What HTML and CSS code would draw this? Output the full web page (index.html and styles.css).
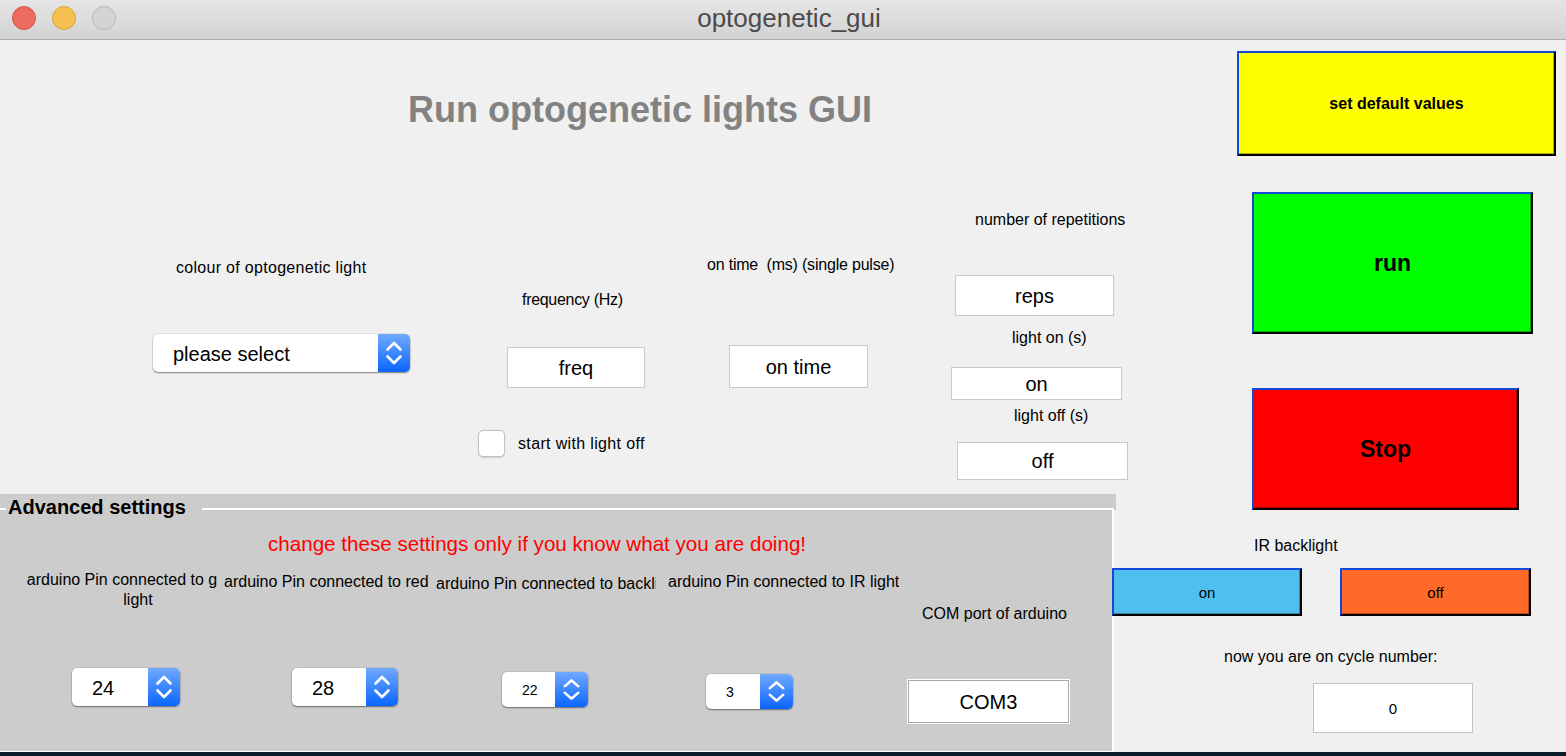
FILE: index.html
```html
<!DOCTYPE html>
<html>
<head>
<meta charset="utf-8">
<title>optogenetic_gui</title>
<link rel="stylesheet" href="styles.css">
</head>
<body>
<div class="window">
  <header class="titlebar">
    <div class="lights">
      <span class="light red"></span>
      <span class="light yellow"></span>
      <span class="light gray"></span>
    </div>
    <div class="wtitle">optogenetic_gui</div>
    <div></div>
  </header>

  <div class="main">
    <div class="left">
      <section class="top">
        <h1 class="app-title">Run optogenetic lights GUI</h1>
        <div class="controls">
          <div class="col col1">
            <div class="lbl">colour of optogenetic light</div>
            <div class="popup big">
              <div class="popup-val">please select</div>
              <div class="popup-btn"><svg viewBox="0 0 32 38" preserveAspectRatio="none"><path d="M9.5 15.5 L16 9 L22.5 15.5 M9.5 22.5 L16 29 L22.5 22.5" fill="none" stroke="#fff" stroke-width="2.6" stroke-linecap="round" stroke-linejoin="round"/></svg></div>
            </div>
          </div>
          <div class="col col2">
            <div class="lbl">frequency (Hz)</div>
            <div class="edit e-freq">freq</div>
            <div class="check-row">
              <span class="checkbox"></span>
              <span class="lbl">start with light off</span>
            </div>
          </div>
          <div class="col col3">
            <div class="lbl">on time&nbsp; (ms) (single pulse)</div>
            <div class="edit e-ontime">on time</div>
          </div>
          <div class="col col4">
            <div class="lbl l-reps">number of repetitions</div>
            <div class="edit e-reps">reps</div>
            <div class="lbl l-on">light on (s)</div>
            <div class="edit e-on">on</div>
            <div class="lbl l-off">light off (s)</div>
            <div class="edit e-off">off</div>
          </div>
        </div>
      </section>

      <section class="panel">
        <div class="panel-head">
          <span class="ph-left"></span>
          <span class="legend">Advanced settings</span>
          <span class="ph-rule"></span>
        </div>
        <div class="frame">
          <div class="warn">change these settings only if you know what you are doing!</div>
          <div class="pins">
            <div class="pcol pcol1">
              <div class="plbl"><div class="plbl-inner">arduino Pin connected to green<br>light</div></div>
              <div class="popup big">
                <div class="popup-val">24</div>
                <div class="popup-btn"><svg viewBox="0 0 32 38" preserveAspectRatio="none"><path d="M9.5 15.5 L16 9 L22.5 15.5 M9.5 22.5 L16 29 L22.5 22.5" fill="none" stroke="#fff" stroke-width="2.6" stroke-linecap="round" stroke-linejoin="round"/></svg></div>
              </div>
            </div>
            <div class="pcol pcol2">
              <div class="plbl">arduino Pin connected to red</div>
              <div class="popup big">
                <div class="popup-val">28</div>
                <div class="popup-btn"><svg viewBox="0 0 32 38" preserveAspectRatio="none"><path d="M9.5 15.5 L16 9 L22.5 15.5 M9.5 22.5 L16 29 L22.5 22.5" fill="none" stroke="#fff" stroke-width="2.6" stroke-linecap="round" stroke-linejoin="round"/></svg></div>
              </div>
            </div>
            <div class="pcol pcol3">
              <div class="plbl">arduino Pin connected to backlight</div>
              <div class="popup small">
                <div class="popup-val">22</div>
                <div class="popup-btn"><svg viewBox="0 0 32 38" preserveAspectRatio="none"><path d="M9.5 15.5 L16 9 L22.5 15.5 M9.5 22.5 L16 29 L22.5 22.5" fill="none" stroke="#fff" stroke-width="2.6" stroke-linecap="round" stroke-linejoin="round"/></svg></div>
              </div>
            </div>
            <div class="pcol pcol4">
              <div class="plbl">arduino Pin connected to IR light</div>
              <div class="popup small">
                <div class="popup-val">3</div>
                <div class="popup-btn"><svg viewBox="0 0 32 38" preserveAspectRatio="none"><path d="M9.5 15.5 L16 9 L22.5 15.5 M9.5 22.5 L16 29 L22.5 22.5" fill="none" stroke="#fff" stroke-width="2.6" stroke-linecap="round" stroke-linejoin="round"/></svg></div>
              </div>
            </div>
            <div class="pcol pcol5">
              <div class="plbl">COM port of arduino</div>
              <div class="edit e-com">COM3</div>
            </div>
          </div>
        </div>
      </section>
    </div>

    <aside class="right">
      <div class="btn btn-default">set default values</div>
      <div class="btn btn-run">run</div>
      <div class="btn btn-stop">Stop</div>
      <div class="lbl ir-label">IR backlight</div>
      <div class="ir-row">
        <div class="btn btn-on">on</div>
        <div class="btn btn-off">off</div>
      </div>
      <div class="lbl cycle-label">now you are on cycle number:</div>
      <div class="edit e-cycle">0</div>
    </aside>
  </div>
  <div class="desk"></div>
</div>
</body>
</html>
```

FILE: styles.css
```css
html, body {
  margin: 0;
  padding: 0;
}
body {
  width: 1566px;
  height: 756px;
  overflow: hidden;
  background: #f0f0f0;
  font-family: "Liberation Sans", Arial, sans-serif;
  color: #000;
}
.window {
  display: flex;
  flex-direction: column;
  height: 756px;
}

/* title bar */
.titlebar {
  height: 39px;
  border-bottom: 1px solid #acacac;
  background: linear-gradient(#e6e6e6, #d2d2d2);
  display: grid;
  grid-template-columns: 1fr auto 1fr;
  align-items: center;
  flex: none;
}
.lights {
  display: flex;
  gap: 16px;
  padding-left: 12px;
  margin-top: -3px;
}
.light {
  width: 22px;
  height: 22px;
  border-radius: 50%;
  border: 1px solid;
}
.light.red { background: #ed6a5e; border-color: #d5534a; }
.light.yellow { background: #f6c050; border-color: #d9a23b; }
.light.gray { background: #d4d4d4; border-color: #b8b8b8; }
.wtitle {
  font-size: 26px;
  color: #4b4b4b;
  padding-left: 12px;
  margin-top: -2px;
}

.main {
  display: flex;
  height: 712px;
  flex: none;
}
.left {
  width: 1115px;
  flex: none;
  display: flex;
  flex-direction: column;
}
.top {
  height: 454px;
  flex: none;
}
.app-title {
  margin: 0;
  padding: 50px 0 0 408px;
  height: 90px;
  font-size: 36px;
  line-height: 40px;
  font-weight: bold;
  color: #828282;
}
.controls {
  display: flex;
  align-items: flex-start;
}
.col {
  flex: none;
  display: flex;
  flex-direction: column;
  align-items: flex-start;
}
.lbl {
  font-size: 16px;
  line-height: 20px;
  white-space: nowrap;
}

/* edit boxes */
.edit {
  box-sizing: border-box;
  background: #fff;
  border: 1px solid #c9c9c9;
  display: flex;
  align-items: center;
  justify-content: center;
  font-size: 20px;
  flex: none;
  padding-top: 1px;
}

/* popup menus */
.popup {
  display: flex;
  background: #fff;
  border-radius: 5px;
  box-shadow: 0 1px 1.5px rgba(0,0,0,0.45), 0 0 0 0.5px rgba(0,0,0,0.12);
  flex: none;
}
.popup-val {
  flex: 1;
  padding: 3px 0 0 20px;
  display: flex;
  align-items: center;
  font-size: 20px;
}
.popup.small .popup-val {
  font-size: 14px;
  padding-top: 1px;
}
.popup-btn {
  width: 32px;
  flex: none;
  background: linear-gradient(#70a9ff, #0a66ff);
  border-radius: 0 5px 5px 0;
  display: flex;
}
.popup.small .popup-btn {
  width: 33px;
}
.popup-btn svg {
  width: 100%;
  height: 100%;
  display: block;
}

/* column 1 */
.col1 { margin-left: 153px; width: 257px; }
.col1 .lbl { margin-top: 78px; padding-left: 23px; letter-spacing: 0.3px; }
.col1 .popup { margin-top: 56px; width: 257px; height: 38px; }

/* column 2 */
.col2 { margin-left: 68px; width: 167px; }
.col2 > .lbl { margin-top: 110px; padding-left: 44px; letter-spacing: -0.3px; }
.e-freq { margin: 37px 0 0 29px; width: 138px; height: 41px; }
.check-row {
  margin-top: 42px;
  display: flex;
  align-items: center;
  gap: 13px;
}
.check-row .lbl { letter-spacing: 0.35px; }
.checkbox {
  box-sizing: border-box;
  width: 27px;
  height: 27px;
  background: #fff;
  border: 1px solid #c2c2c2;
  border-radius: 5px;
  box-shadow: 0 0.5px 1px rgba(0,0,0,0.15);
}

/* column 3 */
.col3 { margin-left: 62px; width: 187px; }
.col3 .lbl { margin-top: 75px; letter-spacing: -0.2px; }
.e-ontime { margin: 70px 0 0 22px; width: 139px; height: 43px; }

/* column 4 */
.col4 { margin-left: 57px; width: 177px; }
.l-reps { margin-top: 30px; padding-left: 24px; }
.e-reps { margin: 45px 0 0 4px; width: 159px; height: 41px; }
.l-on { margin-top: 12px; padding-left: 61px; }
.e-on { margin-top: 19px; width: 171px; height: 33px; }
.l-off { margin-top: 6px; padding-left: 63px; }
.e-off { margin: 16px 0 0 6px; width: 171px; height: 38px; }

/* advanced panel */
.panel {
  height: 258px;
  flex: none;
}
.panel-head {
  height: 16px;
  width: 1116px;
  background: #cccccc;
  display: flex;
  align-items: flex-end;
}
.ph-left {
  width: 6px;
  border-bottom: 2px solid #fff;
}
.legend {
  position: relative;
  z-index: 1;
  align-self: flex-start;
  width: 194px;
  height: 16px;
  margin-top: 1px;
  padding-left: 2px;
  font-size: 20px;
  line-height: 24px;
  font-weight: bold;
  white-space: nowrap;
}
.ph-rule {
  flex: 1;
  margin-right: 2px;
  border-bottom: 2px solid #fff;
}
.frame {
  box-sizing: border-box;
  height: 242px;
  width: 1114px;
  background: #cccccc;
  border-right: 2px solid #fff;
  border-bottom: 1px solid #fff;
}
.warn {
  padding: 22px 0 0 268px;
  font-size: 20.6px;
  line-height: 24px;
  color: #ff0000;
}
.pins {
  display: flex;
  align-items: flex-start;
}
.pcol {
  flex: none;
  display: flex;
  flex-direction: column;
  align-items: flex-start;
}
.plbl {
  font-size: 16px;
  line-height: 20px;
  white-space: nowrap;
  overflow: hidden;
}
.pcol1 { margin-left: 24px; width: 194px; }
.pcol1 .plbl { margin-top: 14px; width: 194px; }
.plbl-inner { width: 228px; text-align: center; }
.pcol1 .popup { margin: 58px 0 0 48px; width: 108px; height: 38px; }

.pcol2 { margin-left: 6px; width: 205px; }
.pcol2 .plbl { margin-top: 16px; }
.pcol2 .popup { margin: 76px 0 0 68px; width: 106px; height: 38px; }

.pcol3 { margin-left: 7px; width: 220px; }
.pcol3 .plbl { margin-top: 18px; width: 220px; }
.pcol3 .popup { margin: 78px 0 0 66px; width: 86px; height: 35px; }

.pcol4 { margin-left: 12px; width: 231px; }
.pcol4 .plbl { margin-top: 16px; }
.pcol4 .popup { margin: 82px 0 0 38px; width: 87px; height: 35px; }

.pcol5 { margin-left: 9px; width: 163px; }
.pcol5 .plbl { margin-top: 48px; padding-left: 14px; }
.e-com {
  margin-top: 56px;
  width: 161px;
  height: 43px;
  border: 1px solid #a9a9a9;
  box-shadow: 0 0 0 1px #fff, inset 0 0 0 1px #fff;
}

/* right column */
.right {
  flex: none;
  width: 451px;
  display: flex;
  flex-direction: column;
  align-items: flex-start;
}
.btn {
  box-sizing: border-box;
  border-style: solid;
  border-width: 2px;
  border-color: #1448d8 #000 #000 #1448d8;
  box-shadow: inset -1px -1px 0 rgba(0,0,0,0.3);
  display: flex;
  align-items: center;
  justify-content: center;
  flex: none;
}
.btn-default {
  margin: 11px 0 0 122px;
  width: 319px;
  height: 105px;
  background: #ffff00;
  font-size: 16px;
  font-weight: bold;
}
.btn-run {
  margin: 36px 0 0 137px;
  width: 281px;
  height: 142px;
  background: #00ff00;
  font-size: 23px;
  font-weight: bold;
}
.btn-stop {
  margin: 54px 0 0 137px;
  width: 267px;
  height: 122px;
  background: #ff0000;
  font-size: 23px;
  font-weight: bold;
}
.ir-label {
  margin-top: 26px;
  padding-left: 139px;
}
.ir-row {
  margin: 12px 0 0 -3px;
  display: flex;
  gap: 38px;
}
.btn-on {
  width: 190px;
  height: 48px;
  background: #4fbfee;
  font-size: 15px;
}
.btn-off {
  width: 191px;
  height: 48px;
  background: #ff6a29;
  font-size: 15px;
}
.cycle-label {
  margin-top: 31px;
  padding-left: 109px;
}
.e-cycle {
  margin: 16px 0 0 198px;
  width: 160px;
  height: 50px;
  font-size: 15px;
  border-color: #c2c2c2;
}

.desk {
  height: 4px;
  flex: none;
  background: #0b1a29;
}
```
